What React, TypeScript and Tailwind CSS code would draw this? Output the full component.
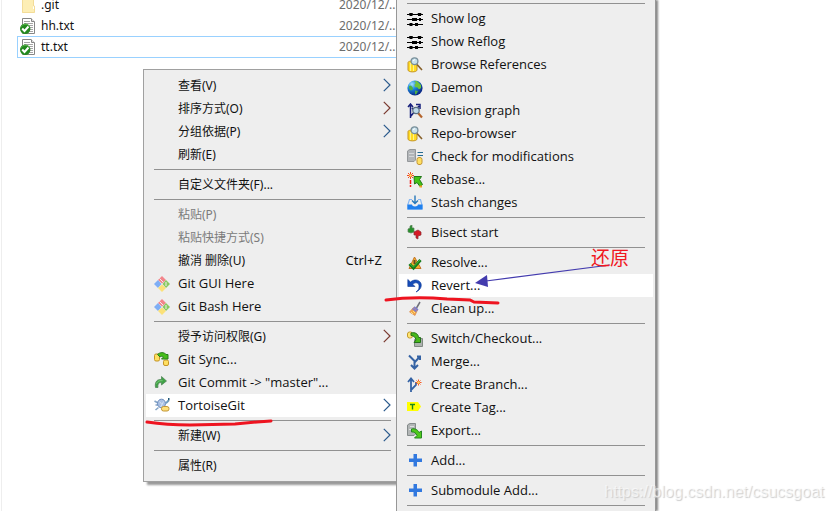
import type { ReactNode } from "react";

const FOLDER = (
  <svg viewBox="0 0 16 16" className="size-4 shrink-0" aria-hidden="true">
    <path d="M2 0H13V12H14.500V16H2Z" fill="#fdeeb5" />
    <path d="M2.500 0V15.500H14.500V9H13.500V0" fill="none" stroke="#f3dc98" />
  </svg>
);

const TEXT_FILE = (
  <svg viewBox="0 0 16 16" className="size-4 shrink-0" aria-hidden="true">
    <path d="M2.500.5H11L14.500 4V15.500H2.500Z" fill="#fff" stroke="#868686" />
    <path d="M11.500.5V3.500H14.500" fill="#ddd" stroke="#868686" />
    <path d="M4 3.500H10M4 5.500H13M5 7.500H13M5 9.500H13M5 11.500H13M5 13.500H13" stroke="#a5a5a5" />
    <circle cx="5.200" cy="10.800" r="5.200" fill="#23891f" />
    <path d="M1.200 8.500A5 5 0 0 1 9.200 8" fill="none" stroke="#58b64b" />
    <path d="M2.200 10.500L4.500 13L8.500 8.500" fill="none" stroke="#fff" strokeWidth="2" />
  </svg>
);

function Icon({ children }: { children: ReactNode }) {
  return (
    <svg viewBox="0 0 16 16" className="size-4 shrink-0" aria-hidden="true">
      {children}
    </svg>
  );
}

const LOG = (
  <Icon>
    <path d="M0 3.500H16M0 8.500H16M0 13.500H16" stroke="#000" />
    <path d="M2.500 3.500H5.500M11 3.500H14M5 8.500H10M12 8.500H14M2.500 13.500H5.500M8 13.500H11" stroke="#000" strokeWidth="3" />
    <path d="M2 2.500H6M10.500 2.500H14.500M4.500 8.500H10.500M2 13.500H6" stroke="#000" strokeOpacity=".5" />
  </Icon>
);

const BROWSE = (
  <Icon>
    <path d="M1 5.500C1 3.500 10 3.500 10 5.500V13C10 15.500 1 15.500 1 13Z" fill="#ffdc22" stroke="#c49428" />
    <path d="M3.500 6V14M6.500 7V14" stroke="#fff18a" />
    <path d="M10 7.500L15 13" stroke="#865f28" strokeWidth="1.600" />
    <circle cx="7.500" cy="4.200" r="3.400" fill="#c7e1ec" stroke="#788e99" strokeWidth="1.300" />
    <path d="M6 4L8 2.500" stroke="#fff" />
  </Icon>
);

const GLOBE = (
  <Icon>
    <defs>
      <radialGradient id="ocean" cx="30%" cy="25%" r="75%">
        <stop offset="0" stopColor="#a5e2ff" />
        <stop offset=".45" stopColor="#1b86dc" />
        <stop offset="1" stopColor="#0a2a88" />
      </radialGradient>
    </defs>
    <circle cx="8" cy="8" r="7.600" fill="url(#ocean)" />
    <path d="M7 1.500L10 1L12 3L14 5V8L12 9.500L10.500 7.500L8 7L7.500 4.500L9 3Z" fill="#6fc43c" />
    <path d="M2 6L4 5.500L6 8L5.500 10L3.500 10.500L2 8.500ZM8 10.500L11 11L9.500 14L8 14.500Z" fill="#4eb045" />
  </Icon>
);

const GRAPH = (
  <Icon>
    <path d="M3.500 15V2M1 4L3.500 1L6 4M4 13L12 3M9 1.500H13V6M5 5L8 8" fill="none" stroke="#17207c" strokeWidth="1.500" />
    <path d="M11 10L15 14.500" stroke="#b4642c" strokeWidth="2.200" />
    <circle cx="9" cy="7.500" r="3.200" fill="#bdd9e9" stroke="#5c7183" strokeWidth="1.200" />
  </Icon>
);

const CHECK_MODS = (
  <Icon>
    <path d="M1 1.500L3 .5H8.500V11L7 12.500H.5V2Z" fill="#b2b5b8" stroke="#94989b" />
    <path d="M2 4.500H7M2 7.500H7" stroke="#d4d7d9" />
    <path d="M10.500 3.500H16M10.500 6.500H16" stroke="#276b91" />
    <rect x="10" y="8.500" width="5" height="7" rx="2" fill="#ffe063" stroke="#c39532" />
  </Icon>
);

const REBASE = (
  <Icon>
    <path d="M3.500 0V7M0 3.500H7M1 1L6 6M6 1L1 6" stroke="#f24b25" />
    <circle cx="3.500" cy="3.500" r="1.300" fill="#ffdf63" />
    <path d="M3.500 8V12M3.500 13V15" stroke="#f31818" strokeWidth="1.500" />
    <path d="M7 4.500H14.500L12.500 7.500L15.500 12.500L13 14.500L10 10.500L7.500 12Z" fill="#43c317" stroke="#217719" />
    <path d="M12.500 14.500H15" stroke="#f2a020" strokeWidth="2" />
  </Icon>
);

const STASH = (
  <Icon>
    <path d="M5 4.500H2.500L.7 10V14H15V10L13.500 4.500H11" fill="none" stroke="#86b7f3" strokeWidth="1.200" />
    <path d="M.5 9.500H5C5 12 11 12 11 9.500H15.500V14.500H.5Z" fill="#1f80ee" />
    <path d="M8 .5V8M5 5.500L8 8.500L11 5.500" fill="none" stroke="#2778b9" strokeWidth="1.400" />
  </Icon>
);

const BISECT = (
  <Icon>
    <path d="M1 4L3 3V1L5 0L5 3H7V7L4 8L1 7Z" fill="#268f2b" stroke="#5b8359" strokeWidth=".7" />
    <path d="M7 7L11 5L14 7V10L11 11L11 14L9 13L9 10H7Z" fill="#d71925" stroke="#8b2c31" strokeWidth=".7" />
  </Icon>
);

const RESOLVE = (
  <Icon>
    <path d="M7.500 2L14 13.500H2Z" fill="#f5ad2d" stroke="#c17626" />
    <path d="M7.500 5V9" stroke="#624821" strokeWidth="2" />
    <path d="M2.500 9L6.500 13L13.500 5" fill="none" stroke="#147c19" strokeWidth="3" />
    <path d="M3 9L6.500 12L13 5" fill="none" stroke="#45b93b" />
  </Icon>
);

const REVERT = (
  <Icon>
    <path d="M.8 1.500V8.500H8L5.700 6.200C9 3.500 12.500 5 12 9C12 11 11 12.500 9 14C13.500 12 15.500 8 13.500 4.500C11.500 1.500 7 1 3.500 4Z" fill="#174db8" stroke="#0c3594" strokeWidth=".6" />
  </Icon>
);

const CLEAN = (
  <Icon>
    <path d="M13 1L9.500 7" stroke="#70707a" strokeWidth="1.500" />
    <path d="M6.500 6.500L10.500 9L8 14.500L2.500 11Z" fill="#f2a449" stroke="#d98b52" strokeWidth=".7" />
    <path d="M7 6L11 9M5.500 7.500L9.500 10.500" stroke="#7f7ccb" strokeWidth="1.600" />
    <path d="M4 11L6 13M6 10L8 12" stroke="#ffe17d" />
  </Icon>
);

const SWITCH = (
  <Icon>
    <path d="M8.500 7.500H15.500V15.500H7.500V9Z" fill="#adb2af" stroke="#808883" />
    <rect x=".5" y="1" width="5" height="6" rx="2" fill="#ffe574" stroke="#c29a2c" />
    <path d="M4 2C8 .8 11.500 3 11.500 6.500H13.500V11.500H7L9 9C8.500 6 6.500 4.500 4 4.500Z" fill="#47b819" stroke="#24711b" />
  </Icon>
);

const MERGE = (
  <Icon>
    <path d="M2 1.500L7.500 7M12.500 3L7.500 8.500V14.500M4 11L7.500 14.500L11 11M10 2.500H13V6" fill="none" stroke="#3462a4" strokeWidth="2" />
  </Icon>
);

const BRANCH = (
  <Icon>
    <path d="M4 15V2M1 5L4 1.500L7 5M4.500 12.500L9 8V5" fill="none" stroke="#3462a4" strokeWidth="1.800" />
    <path d="M11.500 2.500V8.500M8.500 5.500H14.500M9.500 3.500L13.500 7.500M13.500 3.500L9.500 7.500" stroke="#f75a24" />
    <circle cx="11.500" cy="5.500" r="1.300" fill="#ffdb65" />
  </Icon>
);

const TAG = (
  <Icon>
    <path d="M0 2H11L14 6.500L11 11H0Z" fill="#ffff00" />
    <path d="M3 4.500H8M5.500 4.500V9.500" stroke="#198719" strokeWidth="1.400" />
  </Icon>
);

const EXPORT = (
  <Icon>
    <path d="M1 1.500L3 .5H8.500V11L7 12.500H.5V2Z" fill="#b2b6b6" stroke="#858b8b" />
    <path d="M3 3.500H7M2 6.500H7" stroke="#dde0e0" />
    <path d="M4.500 6C8 5 11 7 12 9.500L14.500 8V15H7.500L10 12.500C9 10 7 8.500 4.500 9Z" fill="#4fc91b" stroke="#278523" />
  </Icon>
);

const PLUS = (
  <Icon>
    <path d="M6.500 1H10V5.500H15V9H10V13.500H6.500V9H2V5.500H6.500Z" fill="#3178df" />
  </Icon>
);

const GIT = (
  <Icon>
    <path d="M8 0L12 4L8 7.500L4 4Z" fill="#f3858b" />
    <path d="M4 4L7.500 8L4 12L0 8Z" fill="#7eaef5" />
    <path d="M12 4L16 8L12 12L8.500 8Z" fill="#88c95f" />
    <path d="M8 8.500L12 12L8 16L4 12Z" fill="#fbe179" />
    <path d="M5.500 2.500L9 6M12 6V10" stroke="#eee" />
  </Icon>
);

const SYNC = (
  <Icon>
    <rect x=".5" y="2" width="5" height="7" rx="1.500" fill="#ffdf61" stroke="#c59528" />
    <rect x="9.500" y="8" width="5" height="5.500" rx="1.500" fill="#ffdf61" stroke="#c59528" />
    <path d="M3.500 2.500C6 0 10 0 12 2.500H14V7H7.500L9.500 5C8.500 4 7 4 6 5Z" fill="#45bd19" stroke="#267c1b" />
  </Icon>
);

const COMMIT = (
  <Icon>
    <path d="M1.500 12.500C.5 7 3 4 7.500 4.500V1.500L12.500 6L7.500 10V7.500C4.500 7.500 3.500 9 4 12.500Z" fill="#3fa345" stroke="#4b7f51" strokeWidth=".7" />
    <path d="M2.500 8.500C4 5.500 6 5.700 8.500 5.700" fill="none" stroke="#83cf81" />
  </Icon>
);

const TORTOISE = (
  <Icon>
    <path d="M.5 3L4 5M1.500 12L4.500 9.500M1.500 7H4" stroke="#86a6c8" strokeWidth="1.600" />
    <ellipse cx="7.500" cy="5.500" rx="4" ry="4.300" fill="#a9c0e4" stroke="#6c8cbc" />
    <path d="M5.500 3.500L8 6.500L9.500 3.500M8 6.500L6.500 9" fill="none" stroke="#dceafa" strokeWidth=".8" />
    <path d="M11.500 4.500L13.500 2L15.500 3L12.500 6Z" fill="#6c9cc0" />
    <rect x="14" y="0" width="1.500" height="2.500" fill="#235878" />
    <rect x="7.500" y="8.500" width="7.500" height="4.500" rx="2" fill="#ffe07a" stroke="#c29738" />
  </Icon>
);

type Item =
  | "separator"
  | {
      label: string;
      icon?: ReactNode;
      arrow?: string;
      shortcut?: string;
      disabled?: boolean;
      active?: boolean;
      latin?: boolean;
    };

const BLUE = "#2a5a8c";
const BROWN = "#7a3a30";

const contextItems: Item[] = [
  { label: "查看(V)", arrow: BLUE },
  { label: "排序方式(O)", arrow: BROWN },
  { label: "分组依据(P)", arrow: BLUE },
  { label: "刷新(E)" },
  "separator",
  { label: "自定义文件夹(F)..." },
  "separator",
  { label: "粘贴(P)", disabled: true },
  { label: "粘贴快捷方式(S)", disabled: true },
  { label: "撤消 删除(U)", shortcut: "Ctrl+Z" },
  { label: "Git GUI Here", icon: GIT, latin: true },
  { label: "Git Bash Here", icon: GIT, latin: true },
  "separator",
  { label: "授予访问权限(G)", arrow: BROWN },
  { label: "Git Sync...", icon: SYNC, latin: true },
  { label: 'Git Commit -> "master"...', icon: COMMIT, latin: true },
  { label: "TortoiseGit", icon: TORTOISE, arrow: BLUE, active: true, latin: true },
  "separator",
  { label: "新建(W)", arrow: BLUE },
  "separator",
  { label: "属性(R)" },
];

const tortoiseItems: Item[] = [
  "separator",
  { label: "Show log", icon: LOG, latin: true },
  { label: "Show Reflog", icon: LOG, latin: true },
  { label: "Browse References", icon: BROWSE, latin: true },
  { label: "Daemon", icon: GLOBE, latin: true },
  { label: "Revision graph", icon: GRAPH, latin: true },
  { label: "Repo-browser", icon: BROWSE, latin: true },
  { label: "Check for modifications", icon: CHECK_MODS, latin: true },
  { label: "Rebase...", icon: REBASE, latin: true },
  { label: "Stash changes", icon: STASH, latin: true },
  "separator",
  { label: "Bisect start", icon: BISECT, latin: true },
  "separator",
  { label: "Resolve...", icon: RESOLVE, latin: true },
  { label: "Revert...", icon: REVERT, active: true, latin: true },
  { label: "Clean up...", icon: CLEAN, latin: true },
  "separator",
  { label: "Switch/Checkout...", icon: SWITCH, latin: true },
  { label: "Merge...", icon: MERGE, latin: true },
  { label: "Create Branch...", icon: BRANCH, latin: true },
  { label: "Create Tag...", icon: TAG, latin: true },
  { label: "Export...", icon: EXPORT, latin: true },
  "separator",
  { label: "Add...", icon: PLUS, latin: true },
  "separator",
  { label: "Submodule Add...", icon: PLUS, latin: true },
  "separator",
];

function MenuRows({ items }: { items: Item[] }) {
  return (
    <>
      {items.map((item, i) =>
        item === "separator" ? (
          <div key={i} role="separator" className="mx-2 flex h-[7px] items-center">
            <div className="h-px w-full bg-[#919191]" />
          </div>
        ) : (
          <button
            key={i}
            type="button"
            role="menuitem"
            disabled={item.disabled}
            className={`flex h-[23px] w-full items-center gap-2 px-2 text-left whitespace-nowrap disabled:text-[#7b7b7b] ${
              item.active ? "bg-white" : ""
            } ${item.latin ? "font-['Open_Sans',sans-serif] text-[13px]" : "text-[12px]"}`}
          >
            {item.icon ?? <span className="size-4 shrink-0" />}
            <span className="grow">{item.label}</span>
            {item.shortcut && <span className="pr-[9px] text-[13px]">{item.shortcut}</span>}
            {item.arrow && (
              <svg viewBox="0 0 8 16" className="h-4 w-2 shrink-0" aria-hidden="true">
                <path d="M.8 .8L7 7L.8 13.200" fill="none" stroke={item.arrow} strokeWidth="1.200" />
              </svg>
            )}
          </button>
        ),
      )}
    </>
  );
}

const files = [
  { name: ".git", icon: FOLDER, selected: false },
  { name: "hh.txt", icon: TEXT_FILE, selected: false },
  { name: "tt.txt", icon: TEXT_FILE, selected: true },
];

export default function App() {
  return (
    <main className="relative h-screen overflow-hidden bg-white font-['Noto_Sans','Noto_Sans_CJK_SC',sans-serif] text-[#111]">
      <section className="ml-px flex h-full items-start border-l border-[#eee] pl-[15px]" aria-label="Files">
        <ul className="-mt-[6px] w-[420px] text-[12px]">
          {files.map((file) => (
            <li
              key={file.name}
              className={`flex items-center gap-[5px] border pl-[2px] ${
                file.selected ? "h-[22px] border-[#99d1ff]" : "h-[21px] border-transparent"
              }`}
            >
              {file.icon}
              <span className="w-[293px]">{file.name}</span>
              <time className="text-[#6d6d6d]">2020/12/...</time>
            </li>
          ))}
        </ul>
      </section>

      <div
        role="menu"
        aria-label="Folder menu"
        className="absolute top-[69px] left-[143px] w-[259px] border border-[#a0a0a0] bg-[#eee] px-[2px] pt-1 pb-1 shadow-[4px_3px_2px_#999]"
      >
        <MenuRows items={contextItems} />
      </div>

      <div
        role="menu"
        aria-label="TortoiseGit menu"
        className="absolute top-0 left-[396px] min-h-screen w-[260px] border-x border-[#979797] bg-[#eee] px-[2px] shadow-[2px_0_2px_#888]"
      >
        <MenuRows items={tortoiseItems} />
      </div>

      <svg
        className="pointer-events-none absolute top-0 left-0"
        width="834"
        height="511"
        viewBox="0 0 834 511"
        aria-hidden="true"
      >
        <path d="M486 281L610 265" stroke="#433bae" strokeWidth="1.200" />
        <path d="M475 283L487 275L488 287Z" fill="#433bae" />
        <path d="M386 300C400 298 425 297 447 299L470 300L474 302L498 303" fill="none" stroke="#ee1420" strokeWidth="3" strokeLinecap="round" />
        <path d="M147 422C160 424 172 425 190 425L235 424L257 422L271 421" fill="none" stroke="#ee1420" strokeWidth="3" strokeLinecap="round" />
      </svg>
      <p className="absolute top-[244px] left-[591px] text-[19px] leading-7 text-[#f01822]">还原</p>
      <p className="absolute right-[10px] bottom-[9px] font-['Liberation_Sans',sans-serif] text-[16px] leading-5 text-white/60 [text-shadow:1px_1px_1px_#ccc]">
        https://blog.csdn.net/csucsgoat
      </p>
    </main>
  );
}
